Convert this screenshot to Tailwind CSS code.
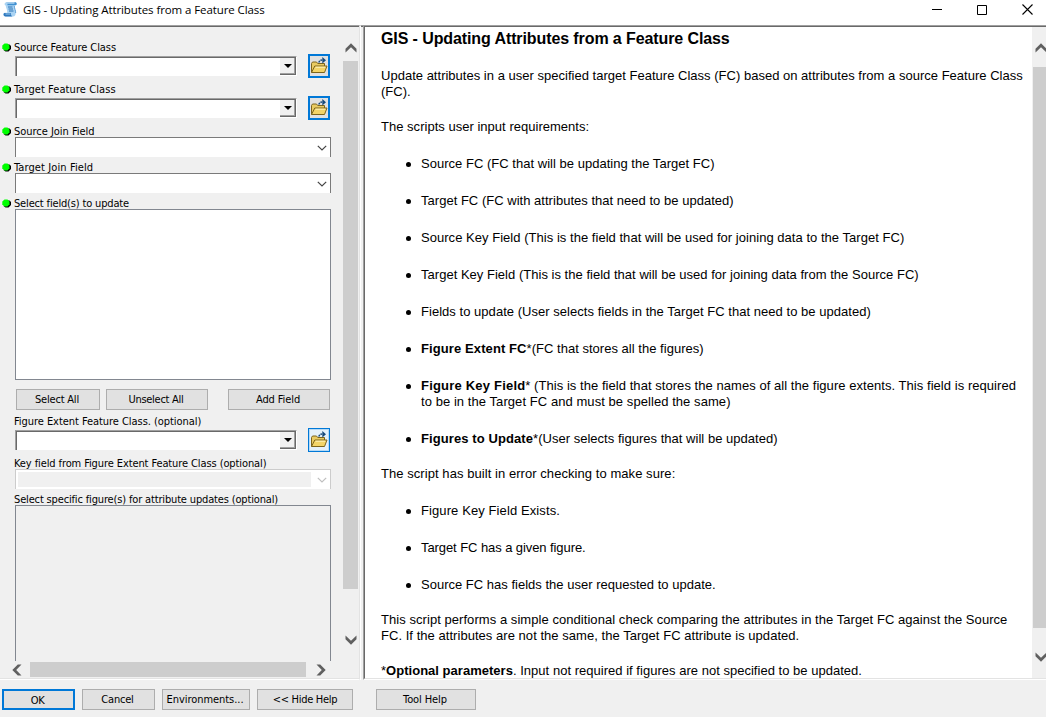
<!DOCTYPE html>
<html lang="en">
<head>
<meta charset="utf-8">
<title>GIS - Updating Attributes from a Feature Class</title>
<script src="https://cdn.jsdelivr.net/npm/@tailwindcss/browser@4"></script>
</head>
<body class="w-[1046px] h-[717px] overflow-hidden flex flex-col bg-[#f0f0f0] text-black text-[11px] font-['DejaVu_Sans_Condensed','DejaVu_Sans',sans-serif]">

<svg class="hidden">
  <symbol id="folder" viewBox="0 0 18 18">
    <path d="M1.500 15.500V6.500L2.500 5h4l1.200 1.500H14.500V9" fill="#e9cb62" stroke="#7d641c"/>
    <path d="M1.500 15.500L4.800 9h12.200l-2.500 6.500z" fill="#f3d468" stroke="#7d641c"/>
    <path d="M5.500 10.200h9.700" stroke="#fff3bd"/>
    <path d="M9 5.500C9.300 3.600 10.500 3 12.500 3" fill="none" stroke="#174a7c" stroke-width="1.600" stroke-dasharray="1.800 .8"/>
    <path d="M12.300 0L16 3.200l-3.700 3.200z" fill="#174a7c"/>
  </symbol>
  <symbol id="dot" viewBox="0 0 9 9">
    <path d="M4.500 1.500h3l1.500 1.500v3L6.500 8.500h-3L1.500 7z" fill="#000"/>
    <path d="M2.500 .5h3L7.500 2.500v2.700L5.500 7.500h-3L.300 5.200V2.500z" fill="#0f0"/>
  </symbol>
  <symbol id="up" viewBox="0 0 12 10"><path d="M.5 9.500V5.800L6 .3l5.500 5.500v3.700L6 4.200z" fill="#606060"/></symbol>
  <symbol id="down" viewBox="0 0 12 10"><path d="M.5 .5v3.700L6 9.700l5.500-5.500V.5L6 5.800z" fill="#606060"/></symbol>
  <symbol id="left" viewBox="0 0 10 12"><path d="M9.500 .5H5.800L.3 6l5.500 5.500h3.700L4.200 6z" fill="#606060"/></symbol>
  <symbol id="right" viewBox="0 0 10 12"><path d="M.5 .5h3.700L9.700 6l-5.500 5.500H.5L5.800 6z" fill="#606060"/></symbol>
  <symbol id="chev" viewBox="0 0 10 6"><path d="M.8 .8L5 5 9.200 .8" fill="none" stroke="currentColor" stroke-width="1.200"/></symbol>
</svg>

<header class="h-[25px] shrink-0 bg-white flex items-start">
  <svg class="w-4 h-4 ml-[2px] mt-px shrink-0" viewBox="0 0 16 16">
    <path d="M4 1.500h9.500c1.500 0 1.500 2.500 0 2.700l-1 .3c-.5 2 .8 4 1.200 6.500.3 2.500-.7 4.500-2.700 4.500H3.500C1 15.500 .7 12 2.700 11.800h2.500C5.700 9 3.800 7 3.700 4.500 2.200 4.200 2.300 1.500 4 1.500z" fill="#a9d3f3"/>
    <path d="M4 1.200h9.300c1.700 0 2 2.800 .2 3H5.500C5.500 2.500 5 1.500 4 1.200z" fill="#3f8fd0"/>
    <path d="M5 2h7.500" stroke="#e3f3ff"/>
    <path d="M2.500 12h6.500c-.3 1.500.3 2.900 1.500 3.500H3.500C1.500 15.500 1 12.500 2.500 12z" fill="#2f78bd"/>
    <path d="M3.500 13h5" stroke="#9ccaf0"/>
    <path d="M6 6h4.500M6.500 8h4.500M7 10h4.500" stroke="#2c72b4"/>
    <path d="M12.300 5c0 2.500 1.500 4.500 1.400 7" fill="none" stroke="#5f9fd6"/>
  </svg>
  <h1 class="ml-[5px] mt-[2px] leading-4 text-[11.5px] tracking-[-0.095px] whitespace-nowrap font-['Open_Sans',sans-serif]">GIS - Updating Attributes from a Feature Class</h1>
  <div class="ml-auto mr-[13px] mt-[4px] flex items-center gap-[35px]">
    <svg class="w-[10px] h-[11px]" viewBox="0 0 10 11"><path d="M0 5.500h10" stroke="#000"/></svg>
    <svg class="w-[10px] h-[10px]" viewBox="0 0 10 10"><path d="M.5 .5h9v9h-9z" fill="none" stroke="#000"/></svg>
    <svg class="w-[11px] h-[11px]" viewBox="0 0 11 11"><path d="M.5 .5l10 10M10.500 .5l-10 10" stroke="#000" stroke-width="1.100"/></svg>
  </div>
</header>

<div class="h-[655px] shrink-0 flex">
  <!-- parameters -->
  <section class="w-[360px] shrink-0 border-t border-t-[#a0a0a0] border-r border-r-[#e3e3e3] border-b border-b-white">
    <div class="h-full border-t border-t-[#696969] border-b border-b-[#e3e3e3] flex">
      <div class="w-[343px] shrink-0 flex flex-col">
        <div class="h-[634px] pt-[13px] overflow-hidden">

          <div class="h-[42px]">
            <div class="h-[14px] flex items-start pl-[2px]"><svg class="w-[9px] h-[9px] mt-[3px] mr-[3px]"><use href="#dot"/></svg><label class="mt-px leading-[13px] tracking-[-0.08px] whitespace-nowrap">Source Feature Class</label></div>
            <div class="h-6 flex">
              <div class="ml-[15px] mt-[2px] w-[282px] h-5 border-t border-l border-[#a0a0a0] border-r border-r-white">
                <div class="h-full border-t border-l border-[#696969] bg-white flex justify-end">
                  <div class="w-[16px] h-[17px] bg-[#f0f0f0] border-r border-b border-[#696969] shadow-[inset_-1px_-1px_#a0a0a0] flex items-center justify-center"><svg class="w-[8px] h-[4px]" viewBox="0 0 8 4"><path d="M0 0h8L4 4z"/></svg></div>
                </div>
              </div>
              <button class="ml-[11px] w-[22px] h-6 border-2 border-[#0078d7] bg-[#e1e1e1] flex items-center justify-center"><svg class="w-[18px] h-[18px]"><use href="#folder"/></svg></button>
            </div>
          </div>

          <div class="h-[42px]">
            <div class="h-[14px] flex items-start pl-[2px]"><svg class="w-[9px] h-[9px] mt-[3px] mr-[3px]"><use href="#dot"/></svg><label class="mt-px leading-[13px] tracking-[0.08px] whitespace-nowrap">Target Feature Class</label></div>
            <div class="h-6 flex">
              <div class="ml-[15px] mt-[2px] w-[282px] h-5 border-t border-l border-[#a0a0a0] border-r border-r-white">
                <div class="h-full border-t border-l border-[#696969] bg-white flex justify-end">
                  <div class="w-[16px] h-[17px] bg-[#f0f0f0] border-r border-b border-[#696969] shadow-[inset_-1px_-1px_#a0a0a0] flex items-center justify-center"><svg class="w-[8px] h-[4px]" viewBox="0 0 8 4"><path d="M0 0h8L4 4z"/></svg></div>
                </div>
              </div>
              <button class="ml-[11px] w-[22px] h-6 border-2 border-[#0078d7] bg-[#e1e1e1] flex items-center justify-center"><svg class="w-[18px] h-[18px]"><use href="#folder"/></svg></button>
            </div>
          </div>

          <div class="h-9">
            <div class="h-[13px] flex items-start pl-[2px]"><svg class="w-[9px] h-[9px] mt-[3px] mr-[3px]"><use href="#dot"/></svg><label class="mt-px leading-[13px] tracking-[-0.03px] whitespace-nowrap">Source Join Field</label></div>
            <div class="ml-[15px] w-[316px] h-5 bg-white border border-b-0 border-[#7a7a7a] flex items-center justify-end pr-[3px]"><svg class="w-[10px] h-[6px] text-[#444]"><use href="#chev"/></svg></div>
          </div>

          <div class="h-9">
            <div class="h-[13px] flex items-start pl-[2px]"><svg class="w-[9px] h-[9px] mt-[3px] mr-[3px]"><use href="#dot"/></svg><label class="mt-px leading-[13px] tracking-[0.1px] whitespace-nowrap">Target Join Field</label></div>
            <div class="ml-[15px] w-[316px] h-5 bg-white border border-b-0 border-[#7a7a7a] flex items-center justify-end pr-[3px]"><svg class="w-[10px] h-[6px] text-[#444]"><use href="#chev"/></svg></div>
          </div>

          <div class="h-[13px] flex items-start pl-[2px]"><svg class="w-[9px] h-[9px] mt-[3px] mr-[3px]"><use href="#dot"/></svg><label class="mt-px leading-[13px] tracking-[-0.16px] whitespace-nowrap">Select field(s) to update</label></div>
          <div class="ml-[15px] w-[316px] h-[171px] bg-white border border-[#828790]"></div>

          <div class="mt-[9px] mb-1 ml-4 flex h-[21px]">
            <button class="w-[84px] pt-[2px] pr-[2px] bg-[#e1e1e1] border border-[#adadad] tracking-[-0.2px]">Select All</button>
            <button class="ml-[6px] w-[102px] pt-[2px] pr-[2px] bg-[#e1e1e1] border border-[#adadad] tracking-[-0.27px]">Unselect All</button>
            <button class="ml-5 w-[102px] pt-[2px] pr-[2px] bg-[#e1e1e1] border border-[#adadad] tracking-[-0.1px]">Add Field</button>
          </div>

          <div class="h-[42px]">
            <div class="h-[14px] flex items-start pl-[14px]"><label class="mt-px leading-[13px] tracking-[-0.05px] whitespace-nowrap">Figure Extent Feature Class. (optional)</label></div>
            <div class="h-6 flex">
              <div class="ml-[15px] mt-[2px] w-[282px] h-5 border-t border-l border-[#a0a0a0] border-r border-r-white">
                <div class="h-full border-t border-l border-[#696969] bg-white flex justify-end">
                  <div class="w-[16px] h-[17px] bg-[#f0f0f0] border-r border-b border-[#696969] shadow-[inset_-1px_-1px_#a0a0a0] flex items-center justify-center"><svg class="w-[8px] h-[4px]" viewBox="0 0 8 4"><path d="M0 0h8L4 4z"/></svg></div>
                </div>
              </div>
              <button class="ml-[11px] w-[22px] h-6 border border-[#0078d7] bg-[#e5f1fb] shadow-[inset_0_0_0_1px_#b5d9f5] flex items-center justify-center"><svg class="w-[18px] h-[18px] shrink-0"><use href="#folder"/></svg></button>
            </div>
          </div>

          <div class="h-9">
            <div class="h-[13px] flex items-start pl-[14px]"><label class="mt-px leading-[13px] tracking-[-0.1px] whitespace-nowrap">Key field from Figure Extent Feature Class (optional)</label></div>
            <div class="ml-[15px] w-[316px] h-5 bg-white border border-b-0 border-[#ccc] flex items-center pl-[2px] pr-[3px]"><div class="w-[293px] h-[15px] bg-[#f0f0f0]"></div><svg class="ml-auto w-[10px] h-[6px] text-[#bfbfbf]"><use href="#chev"/></svg></div>
          </div>

          <div class="h-[13px] flex items-start pl-[14px]"><label class="mt-px leading-[13px] tracking-[-0.155px] whitespace-nowrap">Select specific figure(s) for attribute updates (optional)</label></div>
          <div class="ml-[15px] w-[316px] h-[156px] border border-b-0 border-[#828790]"></div>
        </div>
        <div class="h-[17px] flex items-center pl-[12px]">
          <svg class="w-[10px] h-3"><use href="#left"/></svg>
          <div class="ml-2 w-[276px] h-[15px] bg-[#cdcdcd]"></div>
          <svg class="ml-[10px] w-[10px] h-3"><use href="#right"/></svg>
        </div>
      </div>
      <div class="w-[15px] flex flex-col items-center">
        <svg class="mt-[16px] w-3 h-[10px]"><use href="#up"/></svg>
        <div class="mt-2 w-[15px] h-[528px] bg-[#cdcdcd]"></div>
        <svg class="mt-[46px] w-3 h-[10px]"><use href="#down"/></svg>
      </div>
    </div>
  </section>

  <div class="w-[3px] border-l border-white border-t border-t-[#a0a0a0]"><div class="h-px bg-[#696969]"></div></div>

  <!-- help -->
  <section class="flex-1 min-w-0 border-t border-l border-[#a0a0a0] border-b border-b-white">
    <div class="h-full border-t border-l border-[#696969] border-b border-b-[#e3e3e3] bg-white flex">
      <article class="flex-1 pl-4 overflow-hidden whitespace-nowrap text-[13px] leading-4 tracking-[0.022px] font-['Liberation_Sans',Arial,sans-serif]">
        <h2 class="mt-[2px] h-[39px] text-base leading-[19px] font-bold tracking-[-0.1px]">GIS - Updating Attributes from a Feature Class</h2>
        <p class="tracking-[0.014px]">Update attributes in a user specified target Feature Class (FC) based on attributes from a source Feature Class<br>(FC).</p>
        <p class="mt-[19px]">The scripts user input requirements:</p>
        <ul class="mt-[21px] pl-10 list-none flex flex-col gap-[21px]">
          <li class="flex"><i class="w-[5px] h-[5px] mt-[6px] -ml-[15px] mr-[10px] rounded-full bg-black"></i>Source FC (FC that will be updating the Target FC)</li>
          <li class="flex"><i class="w-[5px] h-[5px] mt-[6px] -ml-[15px] mr-[10px] rounded-full bg-black"></i>Target FC (FC with attributes that need to be updated)</li>
          <li class="flex tracking-[0.034px]"><i class="w-[5px] h-[5px] mt-[6px] -ml-[15px] mr-[10px] rounded-full bg-black"></i>Source Key Field (This is the field that will be used for joining data to the Target FC)</li>
          <li class="flex"><i class="w-[5px] h-[5px] mt-[6px] -ml-[15px] mr-[10px] rounded-full bg-black"></i>Target Key Field (This is the field that will be used for joining data from the Source FC)</li>
          <li class="flex tracking-[0.035px]"><i class="w-[5px] h-[5px] mt-[6px] -ml-[15px] mr-[10px] rounded-full bg-black"></i>Fields to update (User selects fields in the Target FC that need to be updated)</li>
          <li class="flex"><i class="w-[5px] h-[5px] mt-[6px] -ml-[15px] mr-[10px] rounded-full bg-black"></i><span><b class="tracking-[0.1px]">Figure Extent FC</b>*(FC that stores all the figures)</span></li>
          <li class="flex"><i class="w-[5px] h-[5px] mt-[6px] -ml-[15px] mr-[10px] rounded-full bg-black"></i><span><span class="tracking-[0.05px]"><b class="tracking-[0.2px]">Figure Key Field</b>* (This is the field that stores the names of all the figure extents. This field is required</span><br><span class="tracking-[0.065px]">to be in the Target FC and must be spelled the same)</span></span></li>
          <li class="flex"><i class="w-[5px] h-[5px] mt-[6px] -ml-[15px] mr-[10px] rounded-full bg-black"></i><span><b class="tracking-[0.09px]">Figures to Update</b>*(User selects figures that will be updated)</span></li>
        </ul>
        <p class="mt-[19px] tracking-[0.06px]">The script has built in error checking to make sure:</p>
        <ul class="mt-[21px] pl-10 list-none flex flex-col gap-[21px]">
          <li class="flex tracking-[0.1px]"><i class="w-[5px] h-[5px] mt-[6px] -ml-[15px] mr-[10px] rounded-full bg-black"></i>Figure Key Field Exists.</li>
          <li class="flex tracking-[-0.08px]"><i class="w-[5px] h-[5px] mt-[6px] -ml-[15px] mr-[10px] rounded-full bg-black"></i>Target FC has a given figure.</li>
          <li class="flex tracking-[0.01px]"><i class="w-[5px] h-[5px] mt-[6px] -ml-[15px] mr-[10px] rounded-full bg-black"></i>Source FC has fields the user requested to update.</li>
        </ul>
        <p class="mt-[19px]"><span class="tracking-[0.055px]">This script performs a simple conditional check comparing the attributes in the Target FC against the Source</span><br><span class="tracking-[0.04px]">FC. If the attributes are not the same, the Target FC attribute is updated.</span></p>
        <p class="mt-[19px]">*<b>Optional parameters</b>. Input not required if figures are not specified to be updated.</p>
      </article>
      <div class="w-[14px] shrink-0 bg-[#f0f0f0] pl-px flex flex-col overflow-hidden">
        <svg class="mt-[16px] ml-[2px] w-3 h-[10px] shrink-0"><use href="#up"/></svg>
        <div class="mt-[14px] h-[561px] shrink-0 bg-[#cdcdcd]"></div>
        <svg class="mt-6 ml-[2px] w-3 h-[10px] shrink-0"><use href="#down"/></svg>
      </div>
    </div>
  </section>
</div>

<footer class="flex pt-[9px] pl-[2px] h-[37px]">
  <button class="w-[73px] h-[21px] pt-[2px] pr-[2px] bg-[#e1e1e1] border-2 border-[#0078d7] tracking-[-0.5px]">OK</button>
  <button class="ml-[7px] w-[73px] h-[21px] pt-[2px] pr-[2px] bg-[#e1e1e1] border border-[#adadad] tracking-[-0.2px]">Cancel</button>
  <button class="ml-[7px] w-[88px] h-[21px] pt-[2px] pr-[2px] bg-[#e1e1e1] border border-[#adadad] tracking-[-0.05px]">Environments...</button>
  <button class="ml-[7px] w-[96px] h-[21px] pt-[2px] bg-[#e1e1e1] border border-[#adadad] tracking-[-0.3px]">&lt;&lt; Hide Help</button>
  <button class="ml-[23px] w-[100px] h-[21px] pt-[2px] pr-[2px] bg-[#e1e1e1] border border-[#adadad] tracking-[-0.1px]">Tool Help</button>
</footer>
</body>
</html>
